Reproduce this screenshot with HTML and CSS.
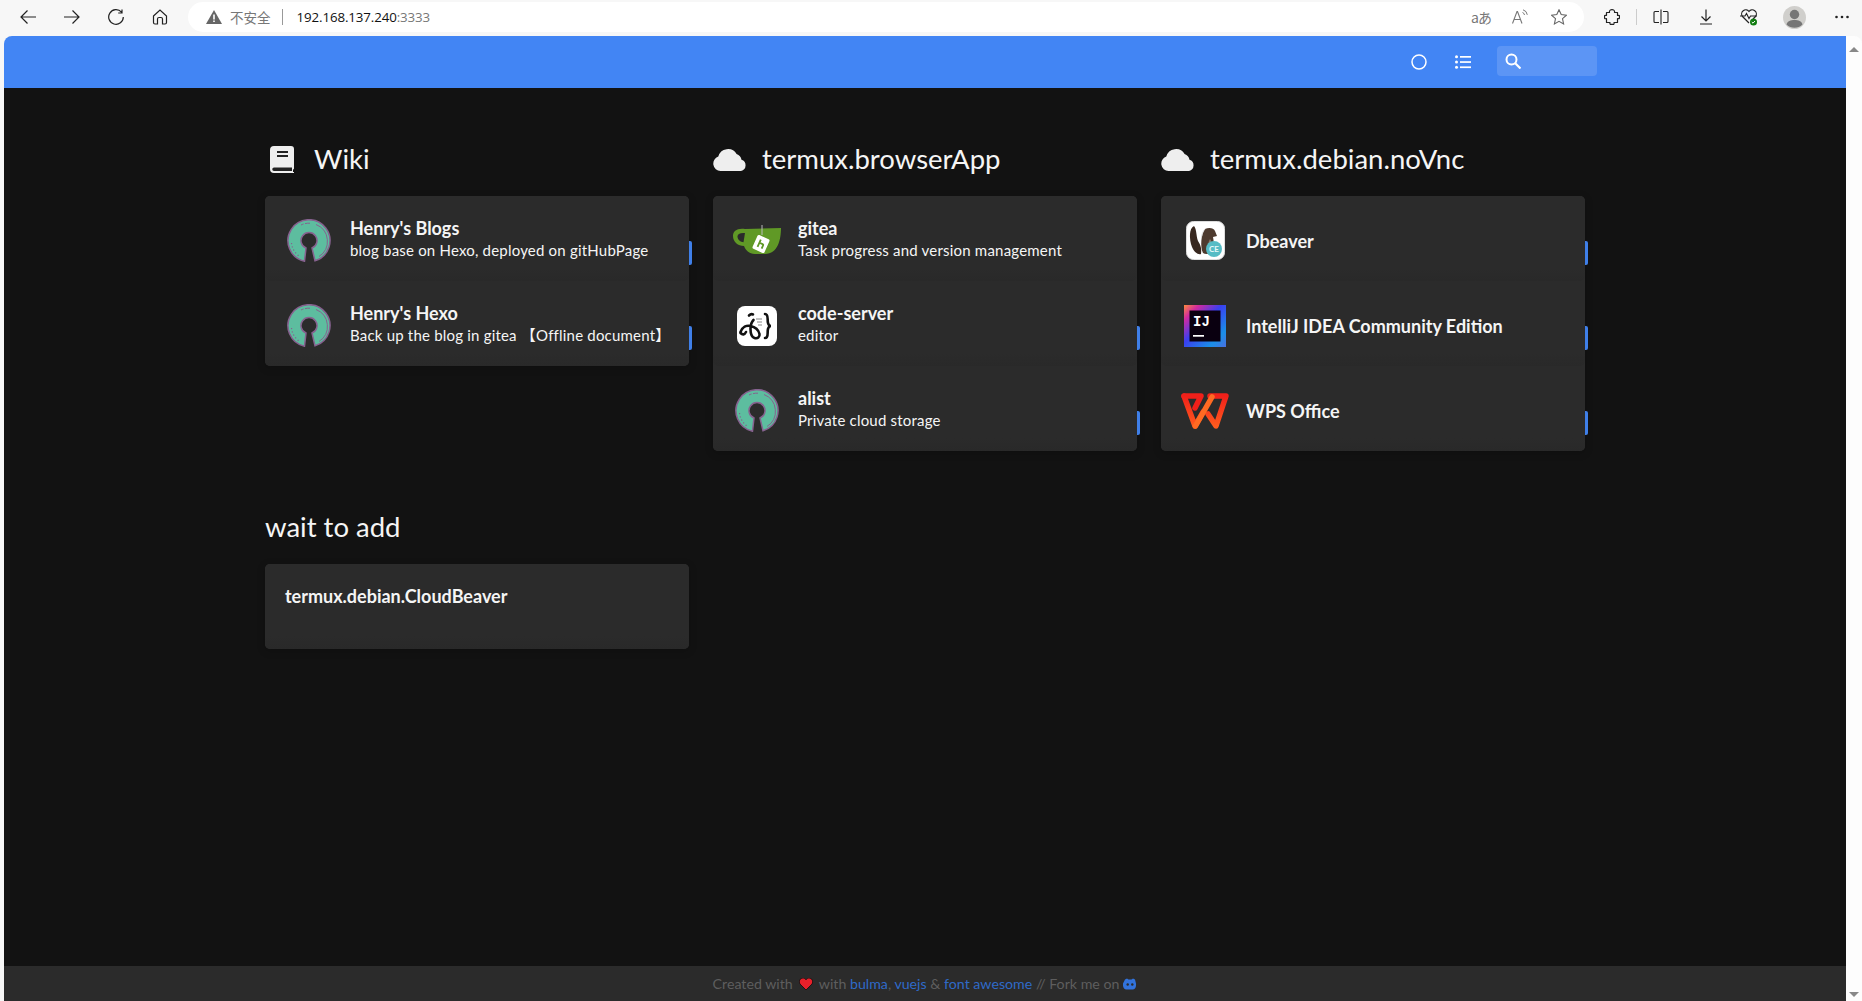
FILE: index.html
```html
<!DOCTYPE html>
<html lang="zh">
<head>
<meta charset="utf-8">
<title>Homer</title>
<link rel="stylesheet" href="styles.css">
</head>
<body>
<svg class="defs" width="0" height="0" aria-hidden="true">
  <symbol id="osi" viewBox="0 0 44 44">
    <path d="M17.500 42.200A21 21 0 1 1 28 41.800L25 29A8 8 0 1 0 19 29Z" fill="#5dbd9f" stroke="#86628f" stroke-width="1.500"/>
    <path d="M32 37.500A18 18 0 0 0 29 5.500" fill="none" stroke="#86628f" stroke-width="1"/>
    <path d="M23 4.200A18 18 0 0 0 14 6" fill="none" stroke="#86628f" stroke-width="1" stroke-dasharray="5 1.500"/>
    <path d="M4.500 24A18 18 0 0 0 12 37" fill="none" stroke="#86628f" stroke-width="1.200" stroke-dasharray="1.200 2.200"/>
  </symbol>
  <symbol id="cloud" viewBox="0 0 34 24">
    <path d="M7.500 24A7.400 7.400 0 0 1 5.300 9.600 10 10 0 0 1 23.600 7 7.500 7.500 0 0 1 28.500 12.800 5.800 5.800 0 0 1 28 24Z" fill="#eee"/>
  </symbol>
</svg>

<header class="chrome">
  <div class="nav-buttons">
    <svg class="ci" viewBox="0 0 16 16"><path d="M16 8H1M7.500 1.500 1 8l6.500 6.500" fill="none" stroke="#222" stroke-width="1.200"/></svg>
    <svg class="ci" viewBox="0 0 16 16"><path d="M0 8h15M8.500 1.500 15 8l-6.500 6.500" fill="none" stroke="#222" stroke-width="1.200"/></svg>
    <svg class="ci" viewBox="0 0 16 16"><path d="M13.500 3.200A7.300 7.300 0 1 0 15.300 8M14 .5v3.500h-3.800" fill="none" stroke="#222" stroke-width="1.200"/></svg>
    <svg class="ci" viewBox="0 0 16 16"><path d="M1.500 7 8 1l6.500 6v6.500a1.500 1.500 0 0 1-1.500 1.500h-2.500V10a1.500 1.500 0 0 0-1.500-1.500H7A1.500 1.500 0 0 0 5.500 10v5H3a1.500 1.500 0 0 1-1.500-1.500Z" fill="none" stroke="#222" stroke-width="1.200"/></svg>
  </div>
  <div class="address">
    <svg class="warn" viewBox="0 0 16 14"><path d="M8 0 16 14H0Z" fill="#666"/><path d="M7.200 4.500h1.600v5H7.200zM7.200 10.500h1.600v1.600H7.200z" fill="#fff"/></svg>
    <span class="insecure">不安全</span>
    <span class="addr-sep"></span>
    <span class="url">192.168.137.240<span class="port">:3333</span></span>
    <span class="addr-actions">
      <span class="translate">aあ</span>
      <svg class="ci" viewBox="0 0 16 16"><path d="M.5 14.500 5 2.500h.5l4.500 12M2.200 10.500h6.200" fill="none" stroke="#777" stroke-width="1.100"/><path d="M10.500 3.500a3 3 0 0 1 2 2.500M11 .8a6 6 0 0 1 4.300 5" fill="none" stroke="#777"/></svg>
      <svg class="ci" viewBox="0 0 16 16"><path d="M8 .8 10.200 5.600 15.400 6.200 11.500 9.700 12.600 14.900 8 12.300 3.400 14.900 4.500 9.700.6 6.200 5.800 5.600Z" fill="none" stroke="#666" stroke-width="1.100"/></svg>
    </span>
  </div>
  <div class="tools">
    <svg class="ci puzzle" viewBox="0 0 16 16"><path d="M5.500 3.500C5 1 7 .6 8 .6s3 .4 2.500 2.900h3v3C16 6 15.400 7 15.400 8s.6 2-1.900 1.500v4H10c.5 2.500-1 1.900-2 1.900s-2.500.6-2-1.900H2.500v-3.800C0 10 .6 9 .6 8S0 6 2.500 6.500v-3Z" fill="none" stroke="#222" stroke-width="1.200" stroke-linejoin="round"/></svg>
    <span class="tool-sep"></span>
    <svg class="ci split" viewBox="0 0 16 16"><path d="M6 2.500H2a1 1 0 0 0-1 1v9a1 1 0 0 0 1 1h4M10 2.500h4a1 1 0 0 1 1 1v9a1 1 0 0 1-1 1h-4M8 .5v15" fill="none" stroke="#222" stroke-width="1.100"/></svg>
    <svg class="ci download" viewBox="0 0 16 16"><path d="M8 .5v11M3.500 7.500 8 12l4.500-4.500M2 15h12" fill="none" stroke="#222" stroke-width="1.200"/></svg>
    <svg class="ci heart" viewBox="0 0 18 18"><path d="M9 15 2.500 8.500A4 4 0 0 1 9 3.500a4 4 0 0 1 6.500 5L13 11" fill="none" stroke="#222" stroke-width="1.200"/><path d="M0 8h5l1.500-2.500L9 10.500l1.500-2.500H17" fill="none" stroke="#222" stroke-width="1.100"/><circle cx="13.500" cy="14" r="3.500" fill="#107c10"/><path d="m11.800 14 1.200 1.200 2-2.200" fill="none" stroke="#fff"/></svg>
    <svg class="avatar" viewBox="0 0 23 23"><circle cx="11.500" cy="11.500" r="11.500" fill="#d0cfcc"/><circle cx="11.500" cy="8.500" r="4.700" fill="#767676"/><path d="M3.500 18.500c1-3.500 4-4.500 8-4.500s7 1 8 4.500a11.500 11.500 0 0 1-16 0Z" fill="#767676"/></svg>
    <svg class="ci dots" viewBox="0 0 16 16"><g fill="#222"><circle cx="2.500" cy="8" r="1.300"/><circle cx="8" cy="8" r="1.300"/><circle cx="13.500" cy="8" r="1.300"/></g></svg>
  </div>
</header>

<div class="viewport">
  <div class="page">
    <nav class="navbar">
      <svg class="nav-icon" viewBox="0 0 16 16"><circle cx="8" cy="8" r="7" fill="none" stroke="#fff" stroke-width="1.500"/></svg>
      <svg class="nav-icon" viewBox="0 0 16 16"><g fill="#fff"><circle cx="1.500" cy="2.800" r="1.500"/><circle cx="1.500" cy="8" r="1.500"/><circle cx="1.500" cy="13.200" r="1.500"/><rect x="5" y="2" width="11" height="1.700"/><rect x="5" y="7.200" width="11" height="1.700"/><rect x="5" y="12.400" width="11" height="1.700"/></g></svg>
      <div class="search">
        <svg class="nav-icon" viewBox="0 0 16 16"><circle cx="6.500" cy="6.500" r="5" fill="none" stroke="#fff" stroke-width="2"/><path d="m10 10 5.500 5.500" stroke="#fff" stroke-width="2.200"/></svg>
      </div>
    </nav>

    <main class="main">
      <div class="groups">
        <section class="group">
          <h2 class="group-title">
            <span class="group-icon"><svg class="book" viewBox="0 0 24 27"><path d="M4 0h17a3 3 0 0 1 3 3v19.500a1 1 0 0 1-1 1V26h1v1H4a4 4 0 0 1-4-4V4a4 4 0 0 1 4-4Z" fill="#eee"/><path d="M7 6h11M7 10h11" stroke="#222" stroke-width="2"/><path d="M4 21.500h18V25H4a1.750 1.750 0 0 1 0-3.500Z" fill="#222"/></svg></span>
            Wiki
          </h2>
          <div class="card">
            <a class="row">
              <span class="icon-box"><svg class="i-osi"><use href="#osi"/></svg></span>
              <span class="text"><span class="title">Henry's Blogs</span><span class="sub">blog base on Hexo, deployed on gitHubPage</span></span>
              <span class="tag"></span>
            </a>
            <a class="row">
              <span class="icon-box"><svg class="i-osi"><use href="#osi"/></svg></span>
              <span class="text"><span class="title">Henry's Hexo</span><span class="sub">Back up the blog in gitea 【Offline document】</span></span>
              <span class="tag"></span>
            </a>
          </div>
        </section>

        <section class="group">
          <h2 class="group-title"><span class="group-icon"><svg class="cloud"><use href="#cloud"/></svg></span>termux.browserApp</h2>
          <div class="card">
            <a class="row">
              <span class="icon-box"><svg class="i-gitea" viewBox="0 0 48 30"><path d="M12 4 48 3c0 11-3 26-16 26H22C16 29 12.500 25 11 21 5 21 0 17 0 11 0 6 4 3 12 4Z" fill="#609926"/><path d="M12 8C7 7.500 4.500 9 4.500 11.500c0 3.500 3 5.500 6 5.800Z" fill="#2b2b2b"/><path d="M29 0v10" stroke="#bbb" stroke-width="1"/><g transform="rotate(24 28 19)"><rect x="21.500" y="11.500" width="13" height="15" rx="1.500" fill="#fff"/><path d="M26 15v8M26 18.500h3.500a1 1 0 0 1 1 1V23" fill="none" stroke="#609926" stroke-width="1.800"/></g></svg></span>
              <span class="text"><span class="title">gitea</span><span class="sub">Task progress and version management</span></span>
            </a>
            <a class="row">
              <span class="icon-box"><svg class="i-code" viewBox="0 0 40 40"><rect width="40" height="40" rx="8" fill="#fff"/><g fill="none" stroke="#111" stroke-width="2.600" stroke-linecap="round"><path d="M3.500 26c2-5 6-7 10-6 5 1 8 4 9 8 .5 3-2 5-5 4-3-1-4-5-4-9 0-4 1-7 3-9"/><path d="M3.500 27c2 2 4 2 5.500-1"/><path d="M12 9.500c1-1 3-1.500 4-1"/><path d="M28 8c4 0 2 6 3 9 .5 2 1.500 3 3 3-1.500 0-2.500 1-3 3-1 3 1 9-3 9"/></g><path d="M19 13h6M20 16h5M21 19h4" stroke="#888"/></svg></span>
              <span class="text"><span class="title">code-server</span><span class="sub">editor</span></span>
              <span class="tag"></span>
            </a>
            <a class="row">
              <span class="icon-box"><svg class="i-osi"><use href="#osi"/></svg></span>
              <span class="text"><span class="title">alist</span><span class="sub">Private cloud storage</span></span>
              <span class="tag"></span>
            </a>
          </div>
        </section>

        <section class="group">
          <h2 class="group-title"><span class="group-icon"><svg class="cloud"><use href="#cloud"/></svg></span>termux.debian.noVnc</h2>
          <div class="card">
            <a class="row">
              <span class="icon-box"><svg class="i-dbeaver" viewBox="0 0 39 39"><rect x=".5" y=".5" width="38" height="38" rx="7" fill="#fff" stroke="#ddd"/><path d="M8 5C3 7 3 18 6 26c2 5 6 8 9 7 1-6-1-10-3-13-2-5-1-11-4-15Z" fill="#38281f"/><path d="M19 8c4-2 9-1 10 2l2 5-4 1c1 4 1 10-1 14-2 3-6 4-9 2-3-6-2-19 2-24Z" fill="#4d3a2e"/><path d="M19 8c-2 2-3 5-3.500 8" fill="none" stroke="#ddd"/><path d="M24 18c2 2 2 8 0 12-2 1-3 0-3-1 1-4 1-8 3-11Z" fill="#8a7a6c"/><circle cx="28" cy="28" r="8" fill="#56bcc5"/><text x="28" y="31" class="ce">CE</text></svg></span>
              <span class="text"><span class="title">Dbeaver</span></span>
              <span class="tag"></span>
            </a>
            <a class="row">
              <span class="icon-box"><svg class="i-ij" viewBox="0 0 42 42"><defs><linearGradient id="ijg" x1="0" y1="0" x2="1" y2="1"><stop offset="0" stop-color="#fe8a3c"/><stop offset=".18" stop-color="#d12aa0"/><stop offset=".45" stop-color="#3a3ff0"/><stop offset=".8" stop-color="#1a8fe8"/><stop offset="1" stop-color="#4a6fe0"/></linearGradient></defs><rect width="42" height="42" fill="url(#ijg)"/><rect x="5.500" y="5.500" width="31" height="31" fill="#0a0010"/><text x="9" y="21" class="ij">IJ</text><rect x="9" y="30" width="11" height="1.700" fill="#fff"/></svg></span>
              <span class="text"><span class="title">IntelliJ IDEA Community Edition</span></span>
              <span class="tag"></span>
            </a>
            <a class="row">
              <span class="icon-box"><svg class="i-wps" viewBox="0 0 48 36"><defs><linearGradient id="wpsg" x1="0" y1="0" x2="0" y2="1"><stop offset="0" stop-color="#f0201a"/><stop offset="1" stop-color="#ff5a1e"/></linearGradient></defs><g fill="none" stroke-width="5.500" stroke-linejoin="round" stroke-linecap="round"><path d="M3 3H20L14 15" stroke="#f0201a"/><path d="M3 3 14 33 22 19" stroke="url(#wpsg)"/><path d="M29 3H45L35 33 27 21" stroke="url(#wpsg)"/><path d="M31 4 14.500 33" stroke="#ff6a22"/></g></svg></span>
              <span class="text"><span class="title">WPS Office</span></span>
              <span class="tag"></span>
            </a>
          </div>
        </section>

        <section class="group">
          <h2 class="group-title">wait to add</h2>
          <div class="card">
            <a class="row row-plain"><span class="title">termux.debian.CloudBeaver</span></a>
          </div>
        </section>
      </div>
    </main>

    <footer class="footer">
      <span>Created with</span>
      <svg class="f-heart" viewBox="0 0 16 14"><path d="M8 14 1 7C-1 4 1 0 4.500 0 6 0 7.300.8 8 2c.7-1.200 2-2 3.500-2C15 0 17 4 15 7Z" fill="#e8202a" stroke="#111" stroke-width="1"/></svg>
      <span>with <a class="link">bulma</a>, <a class="link">vuejs</a> &amp; <a class="link">font awesome</a> // Fork me on</span>
      <svg class="f-git" viewBox="0 0 14 12"><path d="M2 1.500 4 .5l1.500 1h3l1.500-1 2 1 1 4c.3 3-.5 5.500-3 6H3c-2.500-.5-3.300-3-3-6Z" fill="#3273dc"/><circle cx="4.700" cy="6.500" r="1.200" fill="#2b2b2b"/><circle cx="9.300" cy="6.500" r="1.200" fill="#2b2b2b"/></svg>
    </footer>
  </div>
  <aside class="scrollbar">
    <span class="arrow-up"></span>
    <span class="arrow-down"></span>
  </aside>
</div>
</body>
</html>
```

FILE: styles.css
```css
* { box-sizing: border-box; }
html, body { height: 100%; }
body {
  margin: 0;
  height: 100vh;
  overflow: hidden;
  display: flex;
  flex-direction: column;
  background: #f7f7f7;
  font-family: Lato, "Noto Sans CJK SC", sans-serif;
}
.defs { position: absolute; }

/* browser chrome */
.chrome {
  height: 36px;
  flex: none;
  display: flex;
  align-items: flex-start;
  background: #f7f7f7;
}
.ci { width: 16px; height: 16px; flex: none; display: block; }
.nav-buttons {
  width: 188px;
  flex: none;
  padding: 9px 0 0 20px;
  display: flex;
  gap: 28px;
}
.address {
  margin-top: 2px;
  width: 1396px;
  height: 30px;
  flex: none;
  display: flex;
  align-items: center;
  padding: 0 17px 0 18px;
  background: #fff;
  border-radius: 15px;
}
.warn { width: 16px; height: 14px; flex: none; }
.insecure {
  margin-left: 8px;
  font: 13.500px "Noto Sans CJK SC", sans-serif;
  color: #777;
}
.addr-sep { width: 1px; height: 16px; background: #999; margin: 0 14px 0 11px; }
.url {
  font: 13.300px "Open Sans", sans-serif;
  color: #111;
  letter-spacing: -.1px;
}
.port { color: #777; }
.addr-actions {
  margin-left: auto;
  display: flex;
  align-items: center;
  gap: 23px;
}
.translate {
  font: 14px "Noto Sans CJK JP", sans-serif;
  color: #777;
  letter-spacing: -1px;
  width: 18px;
  white-space: nowrap;
}
.tools {
  flex: 1;
  display: flex;
  align-items: center;
  padding-top: 2px;
  height: 32px;
}
.puzzle { margin-left: 20px; }
.tool-sep { width: 1px; height: 16px; background: #ccc; margin: 0 16px; }
.download { margin-left: 29px; }
.heart { margin-left: 26px; width: 18px; height: 18px; }
.avatar { margin-left: 25px; width: 23px; height: 23px; flex: none; }
.dots { margin-left: 28px; }

/* page frame */
.viewport {
  flex: 1;
  min-height: 0;
  display: flex;
  padding-left: 4px;
}
.page {
  flex: 1;
  min-width: 0;
  display: flex;
  flex-direction: column;
  border-top-left-radius: 8px;
  overflow: hidden;
}
.scrollbar {
  width: 16px;
  flex: none;
  background: #fdfdfd;
  border-top-right-radius: 8px;
  display: flex;
  flex-direction: column;
  justify-content: space-between;
  align-items: center;
  padding: 11px 0 4px;
}
.arrow-up, .arrow-down {
  width: 0;
  height: 0;
  border-left: 5px solid transparent;
  border-right: 5px solid transparent;
}
.arrow-up { border-bottom: 5px solid #888; }
.arrow-down { border-top: 5px solid #888; }

/* nav */
.navbar {
  height: 52px;
  flex: none;
  background: #4285f4;
  display: flex;
  align-items: center;
  padding-right: 249px;
  justify-content: flex-end;
}
.nav-icon { width: 16px; height: 16px; flex: none; display: block; }
.navbar > .nav-icon { margin-right: 28px; }
.navbar > .nav-icon:nth-child(2) { margin-right: 26px; }
.search {
  width: 100px;
  height: 30px;
  margin-bottom: 2px;
  padding: 0 8px;
  display: flex;
  align-items: center;
  background: #5c95f5;
  border-radius: 4px;
}

/* main */
.main {
  flex: 1;
  min-height: 0;
  background: #121212;
  padding-top: 52px;
}
.groups {
  width: 1320px;
  margin: 0 auto;
  display: grid;
  grid-template-columns: repeat(3, 424px);
  column-gap: 24px;
  row-gap: 57px;
}
.group { min-width: 0; }
.group-title {
  margin: 0 0 18px;
  height: 38px;
  display: flex;
  align-items: center;
  font: 400 27.500px/38px Lato, sans-serif;
  color: #f5f5f5;
}
.group-icon {
  width: 34px;
  margin-right: 15px;
  flex: none;
  display: flex;
  justify-content: center;
}
.book { width: 24px; height: 27px; display: block; }
.cloud { width: 34px; height: 24px; display: block; }

.card {
  background: #2b2b2b;
  border-radius: 5px;
  box-shadow: 0 2px 8px rgba(0,0,0,.2);
}
.row {
  position: relative;
  height: 85px;
  padding: 0 20px;
  display: flex;
  align-items: center;
  background: linear-gradient(#2b2b2b 85%, #292929);
  border-radius: 5px;
  color: #f5f5f5;
}
.row-plain { align-items: flex-start; padding-top: 20px; }
.icon-box {
  width: 48px;
  height: 48px;
  margin: 5px 17px 0 0;
  flex: none;
  display: flex;
  align-items: center;
  justify-content: center;
}
.icon-box svg { display: block; flex: none; }
.i-osi { width: 44px; height: 44px; }
.i-gitea { width: 48px; height: 30px; margin-top: -2px; }
.i-code { width: 40px; height: 40px; }
.i-dbeaver { width: 39px; height: 39px; margin-top: -1px; }
.i-ij { width: 42px; height: 42px; }
.i-wps { width: 48px; height: 36px; }
.ce { font: 700 8px Lato, sans-serif; fill: #e8f8f8; text-anchor: middle; }
.ij { font: 700 14px "Liberation Mono", monospace; fill: #fff; }

.text {
  display: flex;
  flex-direction: column;
  padding: 4px 0 0;
  min-width: 0;
}
.text .sub { margin: -1px 0 5px; }
.title {
  display: block;
  font: 700 18px/24px Lato, sans-serif;
  color: #f5f5f5;
  white-space: nowrap;
}
.sub {
  display: block;
  font: 400 15px/22px Lato, "Noto Sans CJK SC", sans-serif;
  letter-spacing: .2px;
  color: #f5f5f5;
  white-space: nowrap;
}
.tag {
  position: absolute;
  right: -3px;
  bottom: 16px;
  width: 3px;
  height: 24px;
  background: #3f7fe8;
  border-radius: 0 2px 2px 0;
}

/* footer */
.footer {
  height: 35px;
  flex: none;
  background: #2b2b2b;
  display: flex;
  align-items: center;
  justify-content: center;
  font: 400 14.200px Lato, sans-serif;
  color: #5e5e5e;
  white-space: pre-wrap;
}
.link { color: #2f6ac8; }
.f-heart { width: 14px; height: 12px; margin: 0 6px; flex: none; }
.f-git { width: 14px; height: 12px; margin-left: 4px; flex: none; }
```
